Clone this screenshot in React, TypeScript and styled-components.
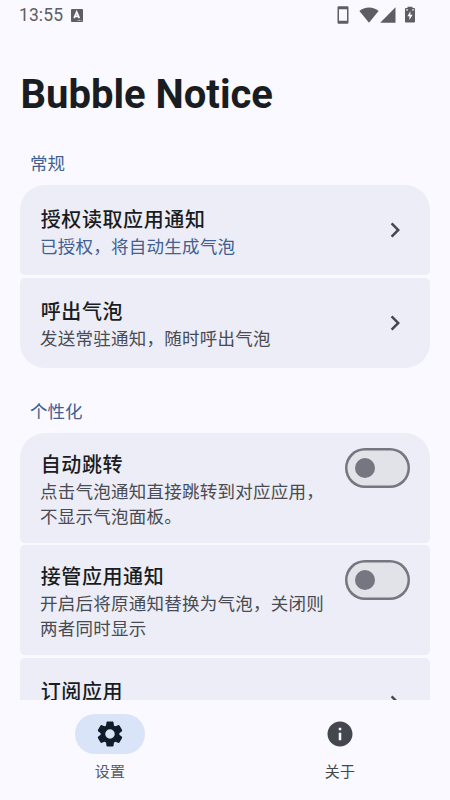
import React from "react";
import styled, { createGlobalStyle } from "styled-components";

const GlobalStyle = createGlobalStyle`
  * { box-sizing: border-box; }
  body {
    margin: 0;
    background: #faf9ff;
    font-family: Roboto, "Noto Sans CJK SC", sans-serif;
    color: #191c20;
  }
`;

const Screen = styled.div`
  display: flex;
  flex-direction: column;
  width: 450px;
  height: 800px;
  overflow: hidden;
  background: #faf9ff;
`;

const StatusBar = styled.header`
  display: flex;
  flex: none;
  align-items: center;
  height: 30px;
  padding: 0 34px 0 19px;
  color: #5e5e62;
`;

const Clock = styled.span`
  font-size: 17.5px;
  line-height: 30px;
  letter-spacing: 0.1px;
  margin-right: 8px;
`;

const StatusIcons = styled.div`
  display: flex;
  align-items: center;
  margin-left: auto;
`;

const Glyph = styled.svg<{ $gap?: number }>`
  display: block;
  flex: none;
  margin-left: ${(p) => p.$gap ?? 0}px;
  fill: currentColor;
`;

const Content = styled.main`
  flex: none;
  height: 670px;
  padding: 0 20px;
  overflow: hidden;
`;

const PageTitle = styled.h1`
  margin: 0;
  padding: 40px 0 0 0.5px;
  height: 113px;
  font-size: 40px;
  line-height: 50px;
  font-weight: 700;
`;

const SectionTitle = styled.h2<{ $spaced?: boolean }>`
  margin: ${(p) => (p.$spaced ? "32px" : "9px")} 0 7.5px;
  padding-left: 10px;
  font-size: 17.5px;
  line-height: 25.5px;
  font-weight: 400;
  color: #415f91;
`;

const Group = styled.section`
  display: flex;
  flex-direction: column;
  gap: 2.5px;
`;

const Card = styled.div<{ $first?: boolean; $last?: boolean; $toggle?: boolean }>`
  display: flex;
  align-items: flex-start;
  justify-content: space-between;
  height: ${(p) => (p.$toggle ? 110 : 90)}px;
  padding: ${(p) => (p.$toggle ? "15px 20px" : "17.5px 20px")};
  background: #ecedf6;
  border-radius: ${(p) =>
    `${p.$first ? "25px 25px" : "5px 5px"} ${p.$last ? "25px 25px" : "5px 5px"}`};
`;

const Texts = styled.div`
  width: 290px;
  padding-top: 2px;
`;

const Label = styled.div`
  padding-left: 0.7px;
  font-size: 20px;
  line-height: 30px;
  font-weight: 500;
  letter-spacing: 0.6px;
`;

const Description = styled.div<{ $accent?: boolean }>`
  font-size: 17.5px;
  line-height: 25px;
  letter-spacing: 0.25px;
  color: ${(p) => (p.$accent ? "#415f91" : "#484b52")};
`;

const ChevronBox = styled.div`
  display: flex;
  align-items: center;
  height: 55px;
  color: #44474e;
`;

const Track = styled.button`
  display: flex;
  align-items: center;
  flex: none;
  width: 65px;
  height: 40px;
  padding: 0 10px;
  border: 0;
  border-radius: 20px;
  background: #e2e2e9;
  box-shadow: inset 0 0 0 2.5px #74777f;
`;

const Thumb = styled.span`
  width: 20px;
  height: 20px;
  border-radius: 50%;
  background: #74777f;
`;

const BottomNav = styled.nav`
  display: flex;
  flex: none;
  gap: 10px;
  height: 100px;
  padding-top: 14px;
  background: #faf9ff;
`;

const NavItem = styled.div`
  display: flex;
  flex: 1;
  flex-direction: column;
  align-items: center;
`;

const Pill = styled.div<{ $active?: boolean }>`
  display: flex;
  align-items: center;
  justify-content: center;
  width: 70px;
  height: 40px;
  border-radius: 20px;
  background: ${(p) => (p.$active ? "#dae4f8" : "transparent")};
  color: ${(p) => (p.$active ? "#111c2b" : "#44474e")};
`;

const NavLabel = styled.span<{ $active?: boolean }>`
  margin-top: 8px;
  font-size: 15px;
  line-height: 20px;
  letter-spacing: 0.3px;
  color: ${(p) => (p.$active ? "#575b68" : "#44474e")};
`;

const Chevron = () => (
  <ChevronBox>
    <Glyph width="30" height="30" viewBox="0 0 24 24">
      <path d="M10 6 8.59 7.41 13.17 12l-4.58 4.59L10 18l6-6z" />
    </Glyph>
  </ChevronBox>
);

interface ItemProps {
  title: string;
  text?: string;
  first?: boolean;
  last?: boolean;
  accent?: boolean;
  toggle?: boolean;
}

const Item = ({ title, text, first, last, accent, toggle }: ItemProps) => (
  <Card $first={first} $last={last} $toggle={toggle}>
    <Texts>
      <Label>{title}</Label>
      {text && <Description $accent={accent}>{text}</Description>}
    </Texts>
    {toggle ? (
      <Track role="switch" aria-checked={false} aria-label={title}>
        <Thumb />
      </Track>
    ) : (
      <Chevron />
    )}
  </Card>
);

export default function App() {
  return (
    <Screen>
      <GlobalStyle />
      <StatusBar>
        <Clock>13:55</Clock>
        <Glyph width="12" height="13" viewBox="0 0 12 13">
          <rect width="12" height="13" rx="1" />
          <path d="M3.1 9.2 5.7 3 8.3 9.2M4 7.3h3.4" fill="none" stroke="#faf9ff" strokeWidth="1.7" />
          <path d="M6.5 11.4h4" stroke="#faf9ff" strokeWidth="0.7" strokeDasharray="1 0.5" />
        </Glyph>
        <StatusIcons>
          <Glyph width="12" height="18" viewBox="0 0 12 18">
            <path
              fillRule="evenodd"
              d="M1.7.3h8.6A1.2 1.2 0 0 1 11.5 1.5v15a1.2 1.2 0 0 1-1.2 1.2H1.7A1.2 1.2 0 0 1 .5 16.5v-15A1.2 1.2 0 0 1 1.7.3ZM2 3.2v11.6h8V3.2Z"
            />
          </Glyph>
          <Glyph $gap={10} width="20" height="16" viewBox="0 0 20 16">
            <path d="M10 15.8.4 4.1C3 1.8 6.3.5 10 .5s7 1.3 9.6 3.6Z" />
          </Glyph>
          <Glyph $gap={1} width="16" height="16" viewBox="0 0 16 16">
            <path d="M15.5.3v15.4H.2Z" />
          </Glyph>
          <Glyph $gap={8} width="12" height="18" viewBox="0 0 12 18">
            <path
              fillRule="evenodd"
              d="M3.5.8h5v1.2h1.4c.6 0 1.1.5 1.1 1.1v12.4c0 .6-.5 1.1-1.1 1.1H2.1c-.6 0-1.1-.5-1.1-1.1V3.1c0-.6.5-1.1 1.1-1.1h1.4ZM6.4 5.2 3.400 10.200h2v3.800L8.600 8.700h-2.200Z"
            />
            <circle cx="3" cy="3.900" r="0.800" fill="#faf9ff" />
            <circle cx="9" cy="3.900" r="0.800" fill="#faf9ff" />
          </Glyph>
        </StatusIcons>
      </StatusBar>
      <Content>
        <PageTitle>Bubble Notice</PageTitle>
        <SectionTitle>常规</SectionTitle>
        <Group>
          <Item first accent title="授权读取应用通知" text="已授权，将自动生成气泡" />
          <Item last title="呼出气泡" text="发送常驻通知，随时呼出气泡" />
        </Group>
        <SectionTitle $spaced>个性化</SectionTitle>
        <Group>
          <Item first toggle title="自动跳转" text="点击气泡通知直接跳转到对应应用，不显示气泡面板。" />
          <Item toggle title="接管应用通知" text="开启后将原通知替换为气泡，关闭则两者同时显示" />
          <Item title="订阅应用" />
        </Group>
      </Content>
      <BottomNav>
        <NavItem>
          <Pill $active>
            <Glyph width="30" height="30" viewBox="0 0 24 24">
              <path d="M19.5 12c0-.23-.01-.45-.03-.68l1.86-1.41c.4-.3.51-.86.26-1.3l-1.87-3.23c-.25-.44-.79-.62-1.25-.42l-2.15.91c-.37-.26-.76-.49-1.17-.68l-.29-2.31c-.06-.5-.49-.88-.99-.88h-3.73c-.51 0-.94.38-1 .88l-.29 2.31c-.41.19-.8.42-1.17.68l-2.15-.91c-.46-.2-1-.02-1.25.42L2.41 8.62c-.25.44-.14.99.26 1.3l1.86 1.41c-.02.22-.03.44-.03.67s.01.45.03.68l-1.86 1.41c-.4.3-.51.86-.26 1.3l1.87 3.23c.25.44.79.62 1.25.42l2.15-.91c.37.26.76.49 1.17.68l.29 2.31c.06.5.49.88.99.88h3.73c.5 0 .93-.38.99-.88l.29-2.31c.41-.19.8-.42 1.17-.68l2.15.91c.46.2 1 .02 1.25-.42l1.87-3.23c.25-.44.14-.99-.26-1.3l-1.86-1.41c.03-.23.04-.45.04-.68zM12 15.8a3.8 3.8 0 1 1 0-7.6 3.8 3.8 0 0 1 0 7.6z" />
            </Glyph>
          </Pill>
          <NavLabel $active>设置</NavLabel>
        </NavItem>
        <NavItem>
          <Pill>
            <Glyph width="30" height="30" viewBox="0 0 24 24">
              <path d="M12 2C6.48 2 2 6.48 2 12s4.48 10 10 10 10-4.48 10-10S17.52 2 12 2zm1 15h-2v-6h2v6zm0-8h-2V7h2v2z" />
            </Glyph>
          </Pill>
          <NavLabel>关于</NavLabel>
        </NavItem>
      </BottomNav>
    </Screen>
  );
}
